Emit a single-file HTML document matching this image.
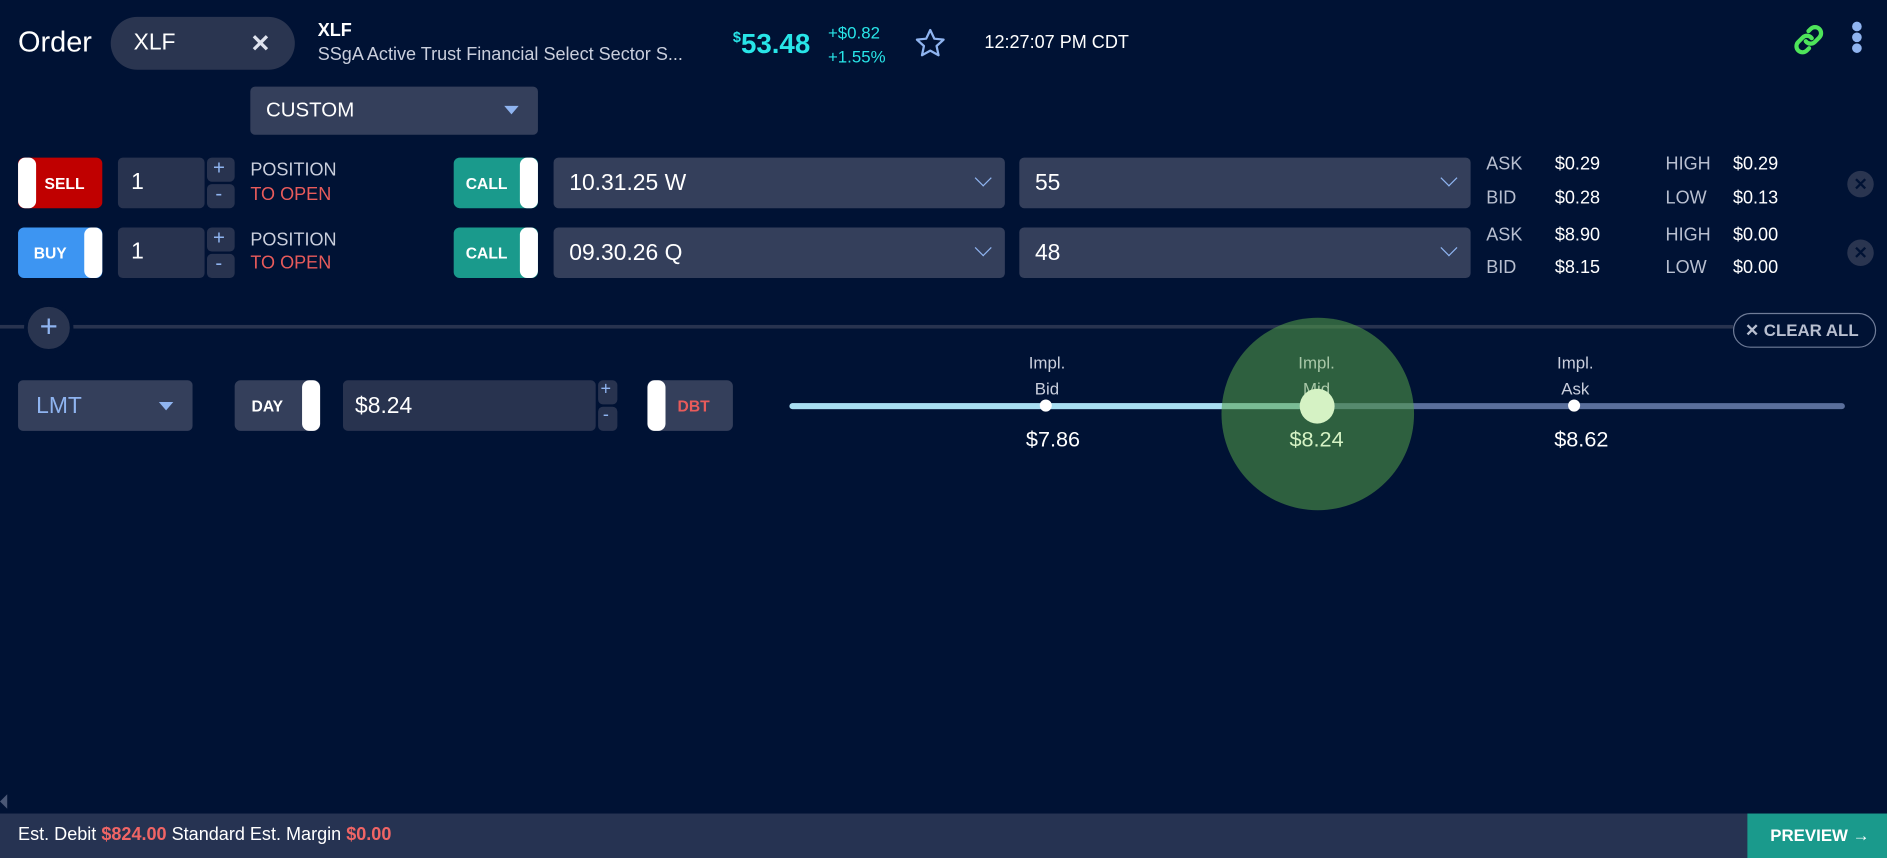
<!DOCTYPE html>
<html><head><meta charset="utf-8"><style>
*{box-sizing:border-box;margin:0;padding:0}
html,body{width:1887px;height:858px;overflow:hidden;background:#001234}
#w{width:1568px;height:713px;position:relative;transform:scale(1.20344);transform-origin:0 0;font-family:"Liberation Sans",sans-serif;color:#fff}
.a{position:absolute}
.box{position:absolute;background:#343f5b;border-radius:4px}
.dk{position:absolute;background:#28334f;border-radius:4px}
.tg{position:absolute;border-radius:5px;font-weight:bold;font-size:13px;display:flex;align-items:center}
.kn{position:absolute;top:0;width:15px;height:100%;background:#fff;border-radius:6px}
.lbl{position:absolute;font-size:15px;color:#b8bfd0}
.val{position:absolute;font-size:15px;color:#fff}
.chev{position:absolute;width:10px;height:10px;border-right:1.5px solid #8fb4f0;border-bottom:1.5px solid #8fb4f0;transform:rotate(45deg)}
</style></head><body><div id="w">
<div class="a" style="left:15px;top:22px;font-size:24px">Order</div>
<div class="a" style="left:92px;top:14px;width:153px;height:44px;border-radius:22px;background:#2a3550"></div>
<div class="a" style="left:111px;top:25px;font-size:19px">XLF</div>
<div class="a" style="left:208px;top:24px;font-size:20px;font-weight:bold;color:#dfe3ee">✕</div>
<div class="a" style="left:264px;top:17px;font-size:15px;font-weight:bold">XLF</div>
<div class="a" style="left:264px;top:37px;font-size:15px;color:#c9cedc">SSgA Active Trust Financial Select Sector S...</div>
<div class="a" style="left:609px;top:23px;font-size:23px;font-weight:bold;color:#28e5e8"><span style="font-size:12px;vertical-align:9px">$</span>53.48</div>
<div class="a" style="left:688px;top:17px;font-size:14px;color:#28e5e8;line-height:20px">+$0.82<br>+1.55%</div>
<svg class="a" style="left:759px;top:22px" width="28" height="28" viewBox="0 0 24 24"><path d="M12 2.5l2.9 6.2 6.6.7-5 4.5 1.4 6.6L12 17.2l-5.9 3.3 1.4-6.6-5-4.5 6.6-.7z" fill="none" stroke="#8fb4f0" stroke-width="1.6" stroke-linejoin="round"/></svg>
<div class="a" style="left:818px;top:27px;font-size:15px">12:27:07 PM CDT</div>
<svg class="a" style="left:1488px;top:18px" width="30" height="30" viewBox="0 0 24 24"><g fill="none" stroke="#4ee45a" stroke-width="2.8" stroke-linecap="round"><path d="M10 13a4 4 0 0 0 6 .5l3-3a4 4 0 0 0-5.7-5.7l-1.5 1.5"/><path d="M14 11a4 4 0 0 0-6-.5l-3 3a4 4 0 0 0 5.7 5.7l1.5-1.5"/></g></svg>
<div class="a" style="left:1539px;top:18px;width:8px;height:8px;border-radius:4px;background:#8fb4f0;box-shadow:0 9px 0 #8fb4f0,0 18px 0 #8fb4f0"></div>

<div class="box" style="left:208px;top:72px;width:239px;height:40px"></div>
<div class="a" style="left:221px;top:82px;font-size:17px">CUSTOM</div>
<div class="a" style="left:419px;top:88px;border-left:6px solid transparent;border-right:6px solid transparent;border-top:7px solid #8fb4f0"></div>

<!-- row1 -->
<div class="tg" style="left:15px;top:131px;width:70px;height:42px;background:#c00000;padding-left:22px">SELL<div class="kn" style="left:0"></div></div>
<div class="dk" style="left:98px;top:131px;width:72px;height:42px"></div>
<div class="a" style="left:109px;top:141px;font-size:19px">1</div>
<div class="dk" style="left:172px;top:131px;width:23px;height:20px"></div><div class="dk" style="left:172px;top:153px;width:23px;height:20px"></div>
<div class="a" style="left:177px;top:130px;font-size:17px;color:#8fb4f0">+</div><div class="a" style="left:179px;top:151px;font-size:17px;color:#8fb4f0">-</div>
<div class="a" style="left:208px;top:133px;font-size:15px;color:#c9cedc">POSITION</div>
<div class="a" style="left:208px;top:153px;font-size:15px;color:#e85b5b">TO OPEN</div>
<div class="tg" style="left:377px;top:131px;width:70px;height:42px;background:#1a9a8c;padding-left:10px">CALL<div class="kn" style="right:0"></div></div>
<div class="box" style="left:460px;top:131px;width:375px;height:42px"></div>
<div class="a" style="left:473px;top:142px;font-size:19px">10.31.25 W</div>
<div class="chev" style="left:812px;top:143px"></div>
<div class="box" style="left:847px;top:131px;width:375px;height:42px"></div>
<div class="a" style="left:860px;top:142px;font-size:19px">55</div>
<div class="chev" style="left:1199px;top:143px"></div>
<div class="lbl" style="left:1235px;top:128px">ASK</div><div class="val" style="left:1292px;top:128px">$0.29</div>
<div class="lbl" style="left:1235px;top:156px">BID</div><div class="val" style="left:1292px;top:156px">$0.28</div>
<div class="lbl" style="left:1384px;top:128px">HIGH</div><div class="val" style="left:1440px;top:128px">$0.29</div>
<div class="lbl" style="left:1384px;top:156px">LOW</div><div class="val" style="left:1440px;top:156px">$0.13</div>
<div class="a" style="left:1535px;top:142px;width:22px;height:22px;border-radius:11px;background:#2a3550;color:#001234;font-weight:bold;font-size:14px;text-align:center;line-height:22px">✕</div>

<!-- row2 -->
<div class="tg" style="left:15px;top:189px;width:70px;height:42px;background:#3d95f2;padding-left:13px">BUY<div class="kn" style="right:0"></div></div>
<div class="dk" style="left:98px;top:189px;width:72px;height:42px"></div>
<div class="a" style="left:109px;top:199px;font-size:19px">1</div>
<div class="dk" style="left:172px;top:189px;width:23px;height:20px"></div><div class="dk" style="left:172px;top:211px;width:23px;height:20px"></div>
<div class="a" style="left:177px;top:188px;font-size:17px;color:#8fb4f0">+</div><div class="a" style="left:179px;top:209px;font-size:17px;color:#8fb4f0">-</div>
<div class="a" style="left:208px;top:191px;font-size:15px;color:#c9cedc">POSITION</div>
<div class="a" style="left:208px;top:210px;font-size:15px;color:#e85b5b">TO OPEN</div>
<div class="tg" style="left:377px;top:189px;width:70px;height:42px;background:#1a9a8c;padding-left:10px">CALL<div class="kn" style="right:0"></div></div>
<div class="box" style="left:460px;top:189px;width:375px;height:42px"></div>
<div class="a" style="left:473px;top:200px;font-size:19px">09.30.26 Q</div>
<div class="chev" style="left:812px;top:201px"></div>
<div class="box" style="left:847px;top:189px;width:375px;height:42px"></div>
<div class="a" style="left:860px;top:200px;font-size:19px">48</div>
<div class="chev" style="left:1199px;top:201px"></div>
<div class="lbl" style="left:1235px;top:187px">ASK</div><div class="val" style="left:1292px;top:187px">$8.90</div>
<div class="lbl" style="left:1235px;top:214px">BID</div><div class="val" style="left:1292px;top:214px">$8.15</div>
<div class="lbl" style="left:1384px;top:187px">HIGH</div><div class="val" style="left:1440px;top:187px">$0.00</div>
<div class="lbl" style="left:1384px;top:214px">LOW</div><div class="val" style="left:1440px;top:214px">$0.00</div>
<div class="a" style="left:1535px;top:199px;width:22px;height:22px;border-radius:11px;background:#2a3550;color:#001234;font-weight:bold;font-size:14px;text-align:center;line-height:22px">✕</div>

<!-- divider -->
<div class="a" style="left:0;top:270px;width:1440px;height:3px;background:#28334f"></div>
<div class="a" style="left:20px;top:252px;width:41px;height:41px;border-radius:21px;background:#2a3550;border:3px solid #001234;color:#8fb4f0;font-size:26px;text-align:center;line-height:33px">+</div>
<div class="a" style="left:1440px;top:260px;width:119px;height:29px;border:1.5px solid #6f7c98;border-radius:15px;color:#b8bfd0;font-size:14px;font-weight:bold;line-height:26px;padding-left:9px">✕ CLEAR ALL</div>

<!-- row3 -->
<div class="box" style="left:15px;top:316px;width:145px;height:42px"></div>
<div class="a" style="left:30px;top:327px;font-size:19px;color:#8fb4f0">LMT</div>
<div class="a" style="left:132px;top:334px;border-left:6px solid transparent;border-right:6px solid transparent;border-top:7px solid #8fb4f0"></div>
<div class="tg" style="left:195px;top:316px;width:71px;height:42px;background:#343f5b;padding-left:14px">DAY<div class="kn" style="right:0"></div></div>
<div class="dk" style="left:285px;top:316px;width:210px;height:42px"></div>
<div class="a" style="left:295px;top:327px;font-size:19px">$8.24</div>
<div class="dk" style="left:497px;top:316px;width:16px;height:20px"></div><div class="dk" style="left:497px;top:338px;width:16px;height:20px"></div>
<div class="a" style="left:499px;top:315px;font-size:15px;color:#8fb4f0">+</div><div class="a" style="left:501px;top:336px;font-size:15px;color:#8fb4f0">-</div>
<div class="tg" style="left:538px;top:316px;width:71px;height:42px;background:#343f5b;padding-left:25px;color:#e85b5b">DBT<div class="kn" style="left:0"></div></div>

<!-- slider -->
<div class="a" style="left:656px;top:335px;width:877px;height:5px;border-radius:3px;background:#5a6f9c"></div>
<div class="a" style="left:656px;top:335px;width:440px;height:5px;border-radius:3px;background:#a8def2"></div>
<div class="a" style="left:864px;top:332px;width:10px;height:10px;border-radius:5px;background:#fff"></div>
<div class="a" style="left:1303px;top:332px;width:10px;height:10px;border-radius:5px;background:#fff"></div>
<div class="a" style="left:820px;top:290px;width:100px;text-align:center;font-size:14px;color:#c9cedc;line-height:22px">Impl.<br>Bid</div>
<div class="a" style="left:1259px;top:290px;width:100px;text-align:center;font-size:14px;color:#c9cedc;line-height:22px">Impl.<br>Ask</div>
<div class="a" style="left:825px;top:355px;width:100px;text-align:center;font-size:18px">$7.86</div>
<div class="a" style="left:1264px;top:355px;width:100px;text-align:center;font-size:18px">$8.62</div>
<div class="a" style="left:1015px;top:264px;width:160px;height:160px;border-radius:80px;background:rgba(84,160,72,0.55)"></div>
<div class="a" style="left:1044px;top:290px;width:100px;text-align:center;font-size:14px;color:#a9c8a8;line-height:22px">Impl.<br>Mid</div>
<div class="a" style="left:1080px;top:323px;width:29px;height:29px;border-radius:15px;background:#d5f2c4"></div>
<div class="a" style="left:1044px;top:355px;width:100px;text-align:center;font-size:18px;color:#d5f2c4">$8.24</div>

<!-- footer -->
<div class="a" style="left:0;top:660px;border-top:6px solid transparent;border-bottom:6px solid transparent;border-right:6px solid #4a5775"></div>
<div class="a" style="left:0;top:676px;width:1568px;height:37px;background:#263352"></div>
<div class="a" style="left:15px;top:685px;font-size:15px">Est. Debit <b style="color:#f06565">$824.00</b> Standard Est. Margin <b style="color:#f06565">$0.00</b></div>
<div class="a" style="left:1452px;top:676px;width:116px;height:37px;background:#1a9a8c;font-size:14px;font-weight:bold;line-height:37px;padding-left:19px">PREVIEW →</div>
</div></body></html>
